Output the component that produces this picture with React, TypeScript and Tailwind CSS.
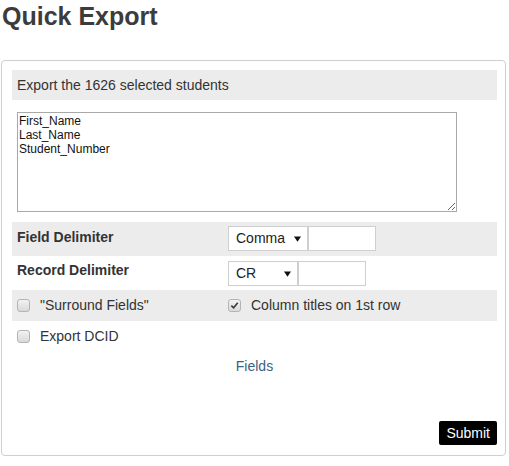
import React from 'react'

const font = { fontFamily: '"Liberation Sans", Arial, sans-serif' }

function Check({ checked = false }: { checked?: boolean }) {
  return (
    <span className="relative inline-flex h-[13px] w-[13px] shrink-0 items-center justify-center rounded-[3px] border border-[#b4b4b4] bg-gradient-to-b from-[#f2f2f2] to-[#d9d9d9]">
      {checked && (
        <svg viewBox="0 0 10 10" className="h-[9px] w-[9px]">
          <path d="M1.5 5.2 L4 7.6 L8.6 2" fill="none" stroke="#3a3a3a" strokeWidth="1.8" />
        </svg>
      )}
    </span>
  )
}

function FakeSelect({ value, width }: { value: string; width: string }) {
  return (
    <div className={`flex h-[25px] items-center justify-between border border-[#cfcfcf] bg-white pl-[7px] pr-[6px] ${width}`}>
      <span className="text-[14px] text-[#222]">{value}</span>
      <svg viewBox="0 0 8 6" className="h-[6px] w-[7px]">
        <path d="M0 0 H8 L4 6 Z" fill="#111" />
      </svg>
    </div>
  )
}

export default function App() {
  return (
    <div className="min-h-[466px] w-[509px] bg-white text-[#333]" style={font}>
      <h1 className="pl-[2px] pt-[4px] text-[25px] font-bold leading-[25px] text-[#3c3c3c]">Quick Export</h1>

      <div className="ml-[1px] mt-[31px] w-[505px] rounded-[4px] border border-[#cfcfcf] pb-[10px] pl-[10px] pr-[8px] pt-[9px]">
        <div className="flex h-[30px] items-center bg-[#ececec] pl-[5px] text-[14px]">
          Export the 1626 selected students
        </div>

        <div className="pl-[5px] pt-[12px]">
          <textarea
            readOnly
            defaultValue={'First_Name\nLast_Name\nStudent_Number'}
            className="block h-[100px] w-[440px] border border-[#a9a9a9] px-[1px] pt-[1px] text-[12px] leading-[14px] text-[#111] outline-none"
          />
        </div>

        <div className="mt-[10px] flex h-[34px] items-start bg-[#ececec] pl-[5px] pt-[4px]">
          <div className="w-[211px] pt-[3px] text-[14px] font-bold leading-[16px]">Field Delimiter</div>
          <FakeSelect value="Comma" width="w-[80px]" />
          <div className="h-[25px] w-[68px] border border-[#cfcfcf] bg-white" />
        </div>

        <div className="flex h-[34px] items-start pl-[5px] pt-[4px]">
          <div className="w-[211px] pt-[2px] text-[14px] font-bold leading-[16px]">Record Delimiter</div>
          <div className="flex pt-[1px]">
            <FakeSelect value="CR" width="w-[70px]" />
            <div className="h-[25px] w-[68px] border border-[#cfcfcf] bg-white" />
          </div>
        </div>

        <div className="flex h-[31px] items-center bg-[#ececec] pl-[5px] text-[14px]">
          <div className="flex w-[211px] items-center gap-[10px]">
            <Check />
            <span>"Surround Fields"</span>
          </div>
          <div className="flex items-center gap-[10px]">
            <Check checked />
            <span>Column titles on 1st row</span>
          </div>
        </div>

        <div className="flex h-[31px] items-center gap-[10px] pl-[5px] text-[14px]">
          <Check />
          <span>Export DCID</span>
        </div>

        <div className="mt-[6px] text-center text-[14px] leading-[16px]">
          <a className="text-[#3d5f7f]">Fields</a>
        </div>

        <div className="mt-[47px] flex justify-end">
          <button className="h-[24px] rounded-[2px] bg-black px-[7px] text-[14px] text-white">Submit</button>
        </div>
      </div>
    </div>
  )
}
